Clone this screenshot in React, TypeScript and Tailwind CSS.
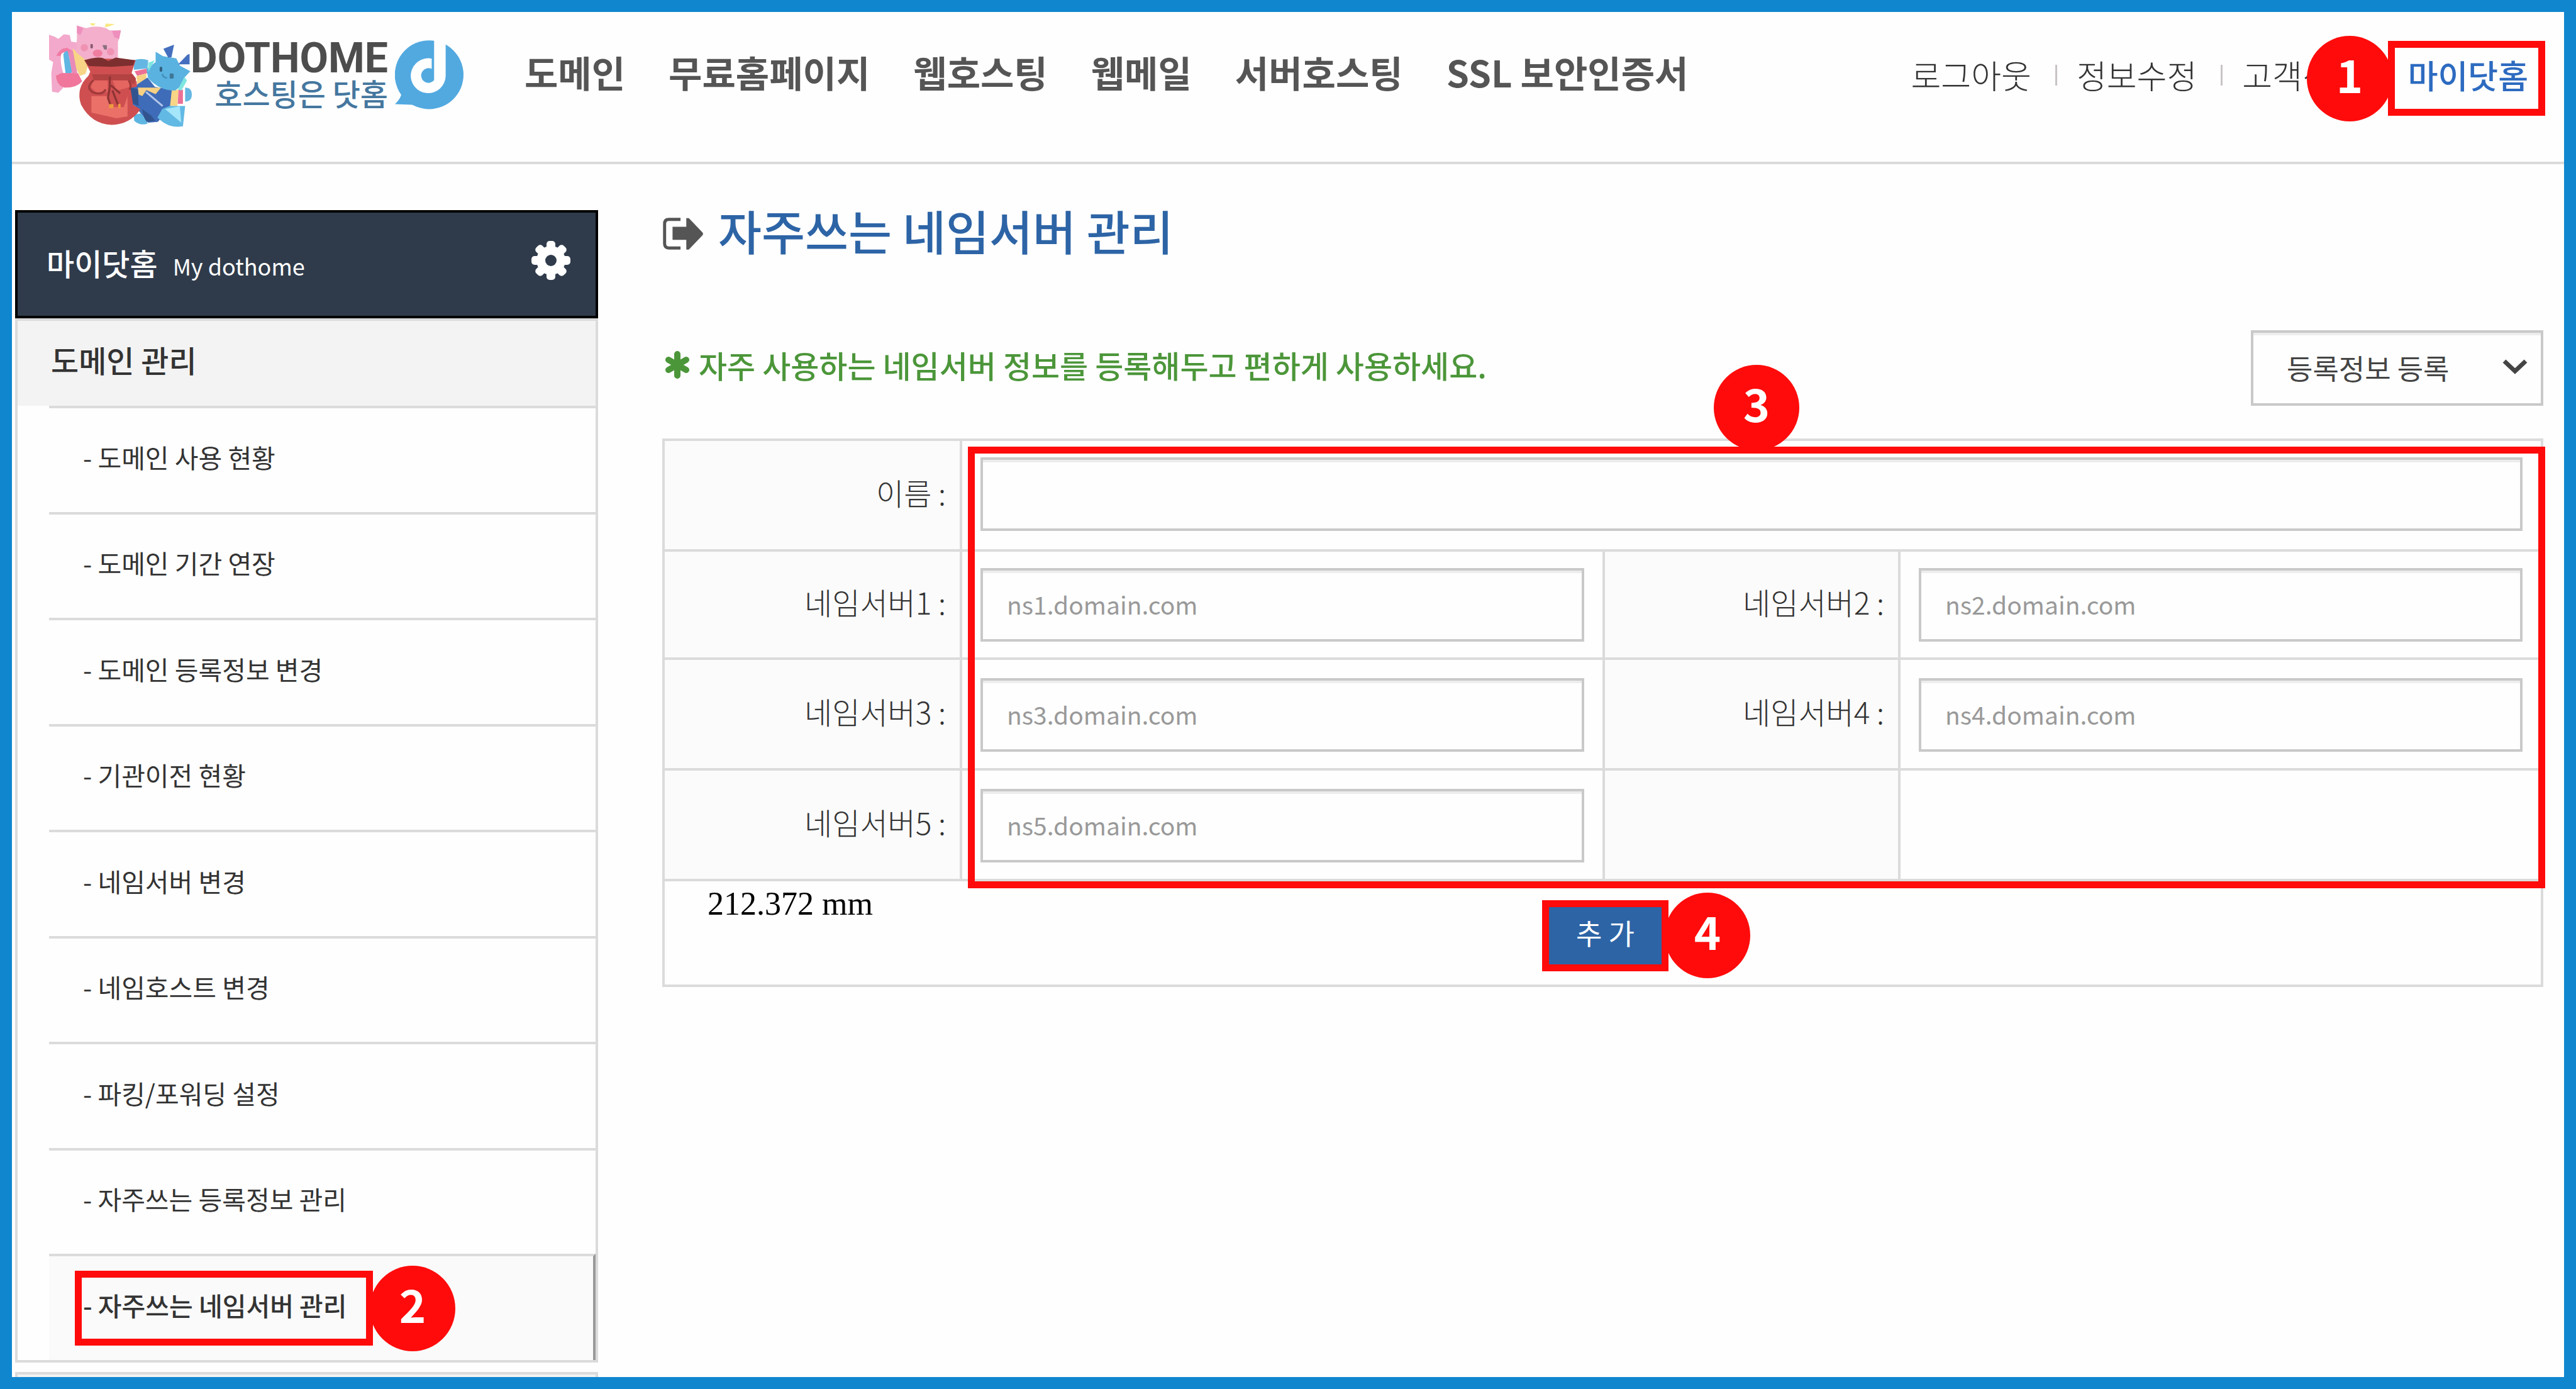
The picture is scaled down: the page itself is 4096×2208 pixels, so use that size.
import { ReactNode } from "react";

const topMenu = ["도메인", "무료홈페이지", "웹호스팅", "웹메일", "서버호스팅", "SSL 보안인증서"];

const sideMenu = [
  "도메인 사용 현황",
  "도메인 기간 연장",
  "도메인 등록정보 변경",
  "기관이전 현황",
  "네임서버 변경",
  "네임호스트 변경",
  "파킹/포워딩 설정",
  "자주쓰는 등록정보 관리",
];

interface StepProps {
  children: ReactNode;
  className: string;
}

// numbered red circle
const Step = ({ children, className }: StepProps) => (
  <span
    className={`absolute z-10 flex size-[136px] items-center justify-center rounded-full bg-[#ff0b0b] pb-4 text-[72px] leading-[72px] font-bold text-white ${className}`}
  >
    {children}
  </span>
);

const Frame = ({ className }: { className: string }) => (
  <span
    className={`pointer-events-none absolute border-[11px] border-[#ff0b0b] ${className}`}
  />
);

const Mascots = () => (
  <svg className="h-[165px] w-[227px]" viewBox="27 36 773 562" aria-hidden="true">
    {/* pink one */}
    <path d="M27 98l30 10 20 12 30-24 32 4 8 36 32 4v90l-20 60-60 100-22 22-34-6-4-100 10-60-22-14z" fill="#f3a9cb" />
    <path d="M66 212q20-44 60-42l34 20-20 22z" fill="#f07ba4" />
    <path d="M92 205q10-15 28-12l10 112h-26q-18-50-12-100z" fill="#fff" />
    <path d="M104 205q8-20 24-18l24 110-10 14-26-6z" fill="#5fb6e2" />
    <path d="M132 190l28-4 20 120-28 4z" fill="#e88bb8" />
    <path d="M64 320l30-14 90 0 22 44q-30 36-96 34-40-10-46-64z" fill="#f0769b" />
    <path d="M154 172l62 48 34 4-26 86-30 10-20-40z" fill="#f8d486" />
    <path d="M178 48l50 14q50-16 108 0l18 12 62 0-8 42-8 20v96H222l-50-40 6-76z" fill="#f3afcc" />
    <path d="M178 48l34 16-16 36-18-10zM416 74l-48 4 12 34 26 8z" fill="#ee8fbd" />
    <path d="M250 36h28l-6 12h-16zM328 58l6-20 50 2-30 12z" fill="#fbe886" />
    <circle cx="218" cy="168" r="20" fill="#f093b3" />
    <circle cx="360" cy="190" r="20" fill="#f093b3" />
    <ellipse cx="290" cy="198" rx="26" ry="20" fill="#f07ea0" />
    <rect x="251" y="148" width="13" height="24" rx="5" fill="#8a5a72" />
    <path d="M316 154h24v24h-14z" fill="#8a7080" />
    {/* blue one */}
    <path d="M486 236q40-14 78 0l-4 44-74 8z" fill="#64b7e2" />
    <path d="M490 296l64-14 6 24-56 14z" fill="#ec7095" />
    <path d="M500 322l54-14 0 44-48 20z" fill="#f6d083" />
    <path d="M500 370l60-40 40 50 92 16-6 92-70 82-52 4-72-90-42-18-8-70z" fill="#3f6cb8" />
    <path d="M462 380l46 14 4 90-44-20zM530 500l50 36 22 28-54 8z" fill="#31548f" />
    <path d="M426 396l38 2 12 78-32-6z" fill="#5fb6e2" />
    <path d="M486 530l40-6 36 54q-40 16-74-14z" fill="#5fb6e2" />
    <path d="M508 384l126 0-30 36-50-22-22 32-20-8z" fill="#f6d083" />
    <path d="M552 408l90 76" stroke="#b5c8ea" strokeWidth="10" />
    <path d="M692 396h36l-6 88h-40z" fill="#f8d486" />
    <path d="M728 396h24v76h-28z" fill="#ec7095" />
    <path d="M764 384q36 0 36 38t-36 38z" fill="#64b7e2" />
    <path d="M640 500l40-16h84l-12 110q-80 14-138-48z" fill="#62b9e4" />
    <path d="M655 500l80-14 8 88z" fill="#a5e6fa" />
    <path d="M604 190l40 24 72 12 20 40 56 30-32 34-4 36-46 34q-80 4-146-66l-10-50 50-38z" fill="#5ab2e0" />
    <path d="M564 250l36-14-20 34-16 30zM760 326l14 20-30 54-20-4z" fill="#7fe6e0" />
    <rect x="626" y="272" width="14" height="26" rx="5" fill="#33607f" />
    <rect x="680" y="308" width="22" height="28" rx="6" fill="#3f7797" />
    <path d="M640 310q4 20 26 22" fill="none" stroke="#4390ba" strokeWidth="9" />
    <path d="M646 174l58-22-14 68-18 2zM726 258l50-52 12-4v56z" fill="#456fbe" />
    {/* lucky bag */}
    <path d="M218 234q140-14 278 2l-22 68 28 50 0 26-34 6 14 92 40 24q-60 84-156 84-110-4-166-110-30-90 40-156l10-22z" fill="#cf4f50" />
    <path d="M218 236q70-20 100-12l30 16 40-18 104 14-10 28-120 8-120-4z" fill="#7c2f2e" />
    <path d="M260 312h220l18 24-10 30-40-22-180 0z" fill="#b34242" />
    <path d="M264 346h80v60l-60 6-30-30zM372 346h90v36l-70 20z" fill="#e56560" />
    <path d="M256 430h86l20 60 70 0 20-60 0 110-60 10-136-30z" fill="#ea7068" />
    <path d="M356 324v56l-10 60 14 40M362 372l50 44M370 400l30 76" fill="none" stroke="#8f3434" strokeWidth="11" />
    <path d="M268 344q-46 40-4 66 50 18 70-16M458 346q20 26 4 50" fill="none" stroke="#a03a3a" strokeWidth="11" />
    <path d="M352 474h24v22h-24zM402 472h12v24h-12z" fill="#ee9a3f" />
  </svg>
);

const LogoMark = () => (
  <svg className="h-[110px] w-[109px]" viewBox="42 33 373 375" aria-hidden="true">
    <circle cx="228" cy="220" r="187" fill="#52a9e0" />
    <path d="M78 316q0 28-36 64l110 4z" fill="#52a9e0" />
    <path d="M242 132A95 95 0 1 0 318 226V20H255V250A40 40 0 1 1 242 188Z" fill="#fefefe" />
  </svg>
);

const Gear = () => (
  <svg className="size-[62px]" viewBox="0 0 62 62" aria-hidden="true">
    {[0, 45, 90, 135].map((deg) => (
      <rect
        key={deg}
        x="24"
        y="0"
        width="14"
        height="62"
        rx="5"
        fill="#fff"
        transform={`rotate(${deg} 31 31)`}
      />
    ))}
    <circle cx="31" cy="31" r="23" fill="#fff" />
    <circle cx="31" cy="31" r="9" fill="#2f3b4b" />
  </svg>
);

const GoIcon = () => (
  <svg className="h-[53px] w-[65px]" viewBox="51 46 226 176" aria-hidden="true">
    <path d="M152 55H88q-24 0-24 24v110q0 24 24 24h64" fill="none" stroke="#555" strokeWidth="17" />
    <path d="M108 96h76V48h14l78 82v10l-78 82h-14v-54h-76z" fill="#555" />
  </svg>
);

const Asterisk = () => (
  <svg className="h-[44px] w-[40px]" viewBox="0 0 40 44" aria-hidden="true">
    <path
      d="M20 5v34M6 14l28 16M34 14L6 30"
      stroke="#4c963a"
      strokeWidth="10"
      strokeLinecap="round"
    />
  </svg>
);

interface FieldProps {
  id: string;
  label: string;
  placeholder?: string;
  wide?: boolean;
  low?: boolean;
}

const Field = ({ id, label, placeholder, wide, low }: FieldProps) => (
  <>
    <th
      scope="row"
      className="border-4 border-[#dbdbdb] bg-[#fbfbfb] pr-[22px] pb-[10px] text-right text-[48px] leading-[60px] font-light text-[#333]"
    >
      <label htmlFor={id}>{label} :</label>
    </th>
    <td
      colSpan={wide ? 3 : 1}
      className={`border-4 border-[#dbdbdb] px-[29px] align-top ${low ? "pt-[29px]" : "pt-[26px]"}`}
    >
      <input
        id={id}
        type="text"
        placeholder={placeholder}
        className="block h-[117px] w-full border-4 border-[#c9c9c9] bg-[#fefefe] px-[38px] pb-1 text-[39px] text-[#444] shadow-[inset_0_4px_0_#ededed] placeholder:text-[#999]"
      />
    </td>
  </>
);

const App = () => {
  return (
    <div className="flex min-h-screen flex-col overflow-hidden border-[19px] border-[#1086cf] bg-[#fefefe] font-['Noto_Sans_CJK_KR',sans-serif] text-[#333]">
      {/* Header */}
      <header className="flex h-[242px] shrink-0 items-center border-b-4 border-[#dbdbdb] pr-[57px] pb-[38px] pl-[59px]">
        <a href="#" className="flex items-center">
          <Mascots />
          <span className="flex w-[312px] flex-col items-end whitespace-nowrap">
            <span className="font-['Roboto'] text-[66px] leading-[56px] font-bold text-[#4d4d4d]">
              DOTHOME
            </span>
            <span className="text-[48px] leading-[52px] font-medium text-[#45779f]">
              호스팅은 닷홈
            </span>
          </span>
          <span className="ml-[11px]">
            <LogoMark />
          </span>
        </a>

        <nav className="ml-[97px] flex gap-[69px] pb-[10px] text-[58px] leading-[72px] font-bold whitespace-nowrap text-[#555]">
          {topMenu.map((el) => (
            <a key={el} href="#">
              {el}
            </a>
          ))}
        </nav>

        <nav className="ml-auto flex items-center text-[52px] leading-[60px] font-light whitespace-nowrap text-[#333]">
          <a href="#">로그아웃</a>
          <i className="mr-[31px] ml-[38px] h-[33px] w-[3px] bg-[#c9c4c4]" />
          <a href="#">정보수정</a>
          <i className="mr-[31px] ml-[38px] h-[33px] w-[3px] bg-[#c9c4c4]" />
          <a href="#">고객센터</a>
          <a href="#" className="relative ml-[72px] font-medium text-[#2d6bc0]">
            마이닷홈
            <Frame className="-top-6 -right-[27px] h-[119px] w-[250px]" />
            <Step className="-top-8 right-[216px]">1</Step>
          </a>
        </nav>
      </header>

      <div className="flex flex-1">
        {/* Sidebar */}
        <aside className="ml-[5px] flex w-[927px] shrink-0 flex-col pt-[73px]">
          <div className="flex h-[172px] items-center justify-between border-4 border-black bg-[#2f3b4b] pr-[40px] pb-[12px] pl-[46px] text-white">
            <h2 className="flex items-baseline gap-[24px] pt-[10px] text-[48px] leading-[60px] font-medium">
              마이닷홈 <small className="text-[36px] font-normal">My dothome</small>
            </h2>
            <button type="button" aria-label="설정">
              <Gear />
            </button>
          </div>

          <div className="border-4 border-[#dbdbdb]">
            <h3 className="bg-[#f3f3f3] pt-[31px] pb-[44px] pl-[53px] text-[48px] leading-[60px] font-medium">
              도메인 관리
            </h3>
            <ul className="ml-[50px] grid h-[1517px] auto-rows-fr text-[41px]">
              {sideMenu.map((el) => (
                <li
                  key={el}
                  className="flex items-center border-t-4 border-[#dbdbdb] pb-[10px] pl-[54px]"
                >
                  <a href="#">- {el}</a>
                </li>
              ))}
              <li className="relative flex items-center border-t-4 border-r-4 border-t-[#dbdbdb] border-r-[#999] bg-[#fafafa] pb-[10px] pl-[54px]">
                <a href="#" className="font-medium">
                  - 자주쓰는 네임서버 관리
                </a>
                <Frame className="top-[23px] left-[41px] h-[119px] w-[474px]" />
                <Step className="top-[15px] left-[510px]">2</Step>
              </li>
            </ul>
          </div>

          <div className="mt-[15px] flex-1 border-4 border-b-0 border-[#dbdbdb] bg-[#f3f3f3]" />
        </aside>

        {/* Content */}
        <main className="ml-[102px] flex-1 pt-[70px] pr-[33px]">
          <div className="flex items-center gap-[24px]">
            <GoIcon />
            <h1 className="pb-[10px] text-[75px] leading-[70px] font-medium text-[#2d64a6]">
              자주쓰는 네임서버 관리
            </h1>
          </div>

          <div className="mt-[114px] flex items-center justify-between">
            <p className="flex items-center gap-[14px] pb-[10px] pl-1 text-[49px] leading-[60px] font-medium text-[#4c963a]">
              <Asterisk />
              자주 사용하는 네임서버 정보를 등록해두고 편하게 사용하세요.
            </p>
            <div className="relative">
              <select
                aria-label="등록정보"
                className="block h-[120px] w-[465px] appearance-none border-4 border-[#c9c9c9] bg-[#fefefe] pl-[53px] text-[45px] text-[#444] shadow-[inset_0_4px_0_#ededed]"
              >
                <option>등록정보 등록</option>
              </select>
              <svg
                className="pointer-events-none absolute top-[46px] right-[25px] h-[24px] w-[40px]"
                viewBox="0 0 40 24"
                fill="none"
                stroke="#444"
                strokeWidth="7"
              >
                <path d="M3 3l17 16L37 3" />
              </svg>
            </div>
          </div>

          <form className="relative mt-[52px]">
            <table className="w-full table-fixed border-collapse">
              <colgroup>
                <col className="w-[473px]" />
                <col />
                <col className="w-[470px]" />
                <col />
              </colgroup>
              <tbody>
                <tr className="h-[176px]">
                  <Field id="name" label="이름" wide />
                </tr>
                <tr className="h-[172px]">
                  <Field id="ns1" label="네임서버1" placeholder="ns1.domain.com" />
                  <Field id="ns2" label="네임서버2" placeholder="ns2.domain.com" />
                </tr>
                <tr className="h-[176px]">
                  <Field id="ns3" label="네임서버3" placeholder="ns3.domain.com" low />
                  <Field id="ns4" label="네임서버4" placeholder="ns4.domain.com" low />
                </tr>
                <tr className="h-[176px]">
                  <Field id="ns5" label="네임서버5" placeholder="ns5.domain.com" low />
                  <td className="border-4 border-[#dbdbdb] bg-[#fbfbfb]" />
                  <td className="border-4 border-[#dbdbdb]" />
                </tr>
                <tr className="h-[168px]">
                  <td colSpan={4} className="border-4 border-[#dbdbdb] p-0 align-top">
                    <div className="grid grid-cols-[1fr_auto_1fr] items-start pl-[8px]">
                      <span className="pt-[6px] pl-[60px] font-['Liberation_Serif',serif] text-[52px] leading-[60px] text-black">
                        212.372 mm
                      </span>
                      <span className="relative mt-[30px]">
                        <button
                          type="button"
                          className="block h-[113px] w-[201px] bg-[#2d64a6] pb-[10px] text-[45px] text-white"
                        >
                          추 가
                        </button>
                        <Frame className="inset-0" />
                        <Step className="-top-[12px] left-[195px]">4</Step>
                      </span>
                    </div>
                  </td>
                </tr>
              </tbody>
            </table>
            <Frame className="top-[13px] -right-[3px] left-[486px] h-[702px]" />
            <Step className="-top-[117px] left-[1672px]">3</Step>
          </form>
        </main>
      </div>
    </div>
  );
};

export default App;
